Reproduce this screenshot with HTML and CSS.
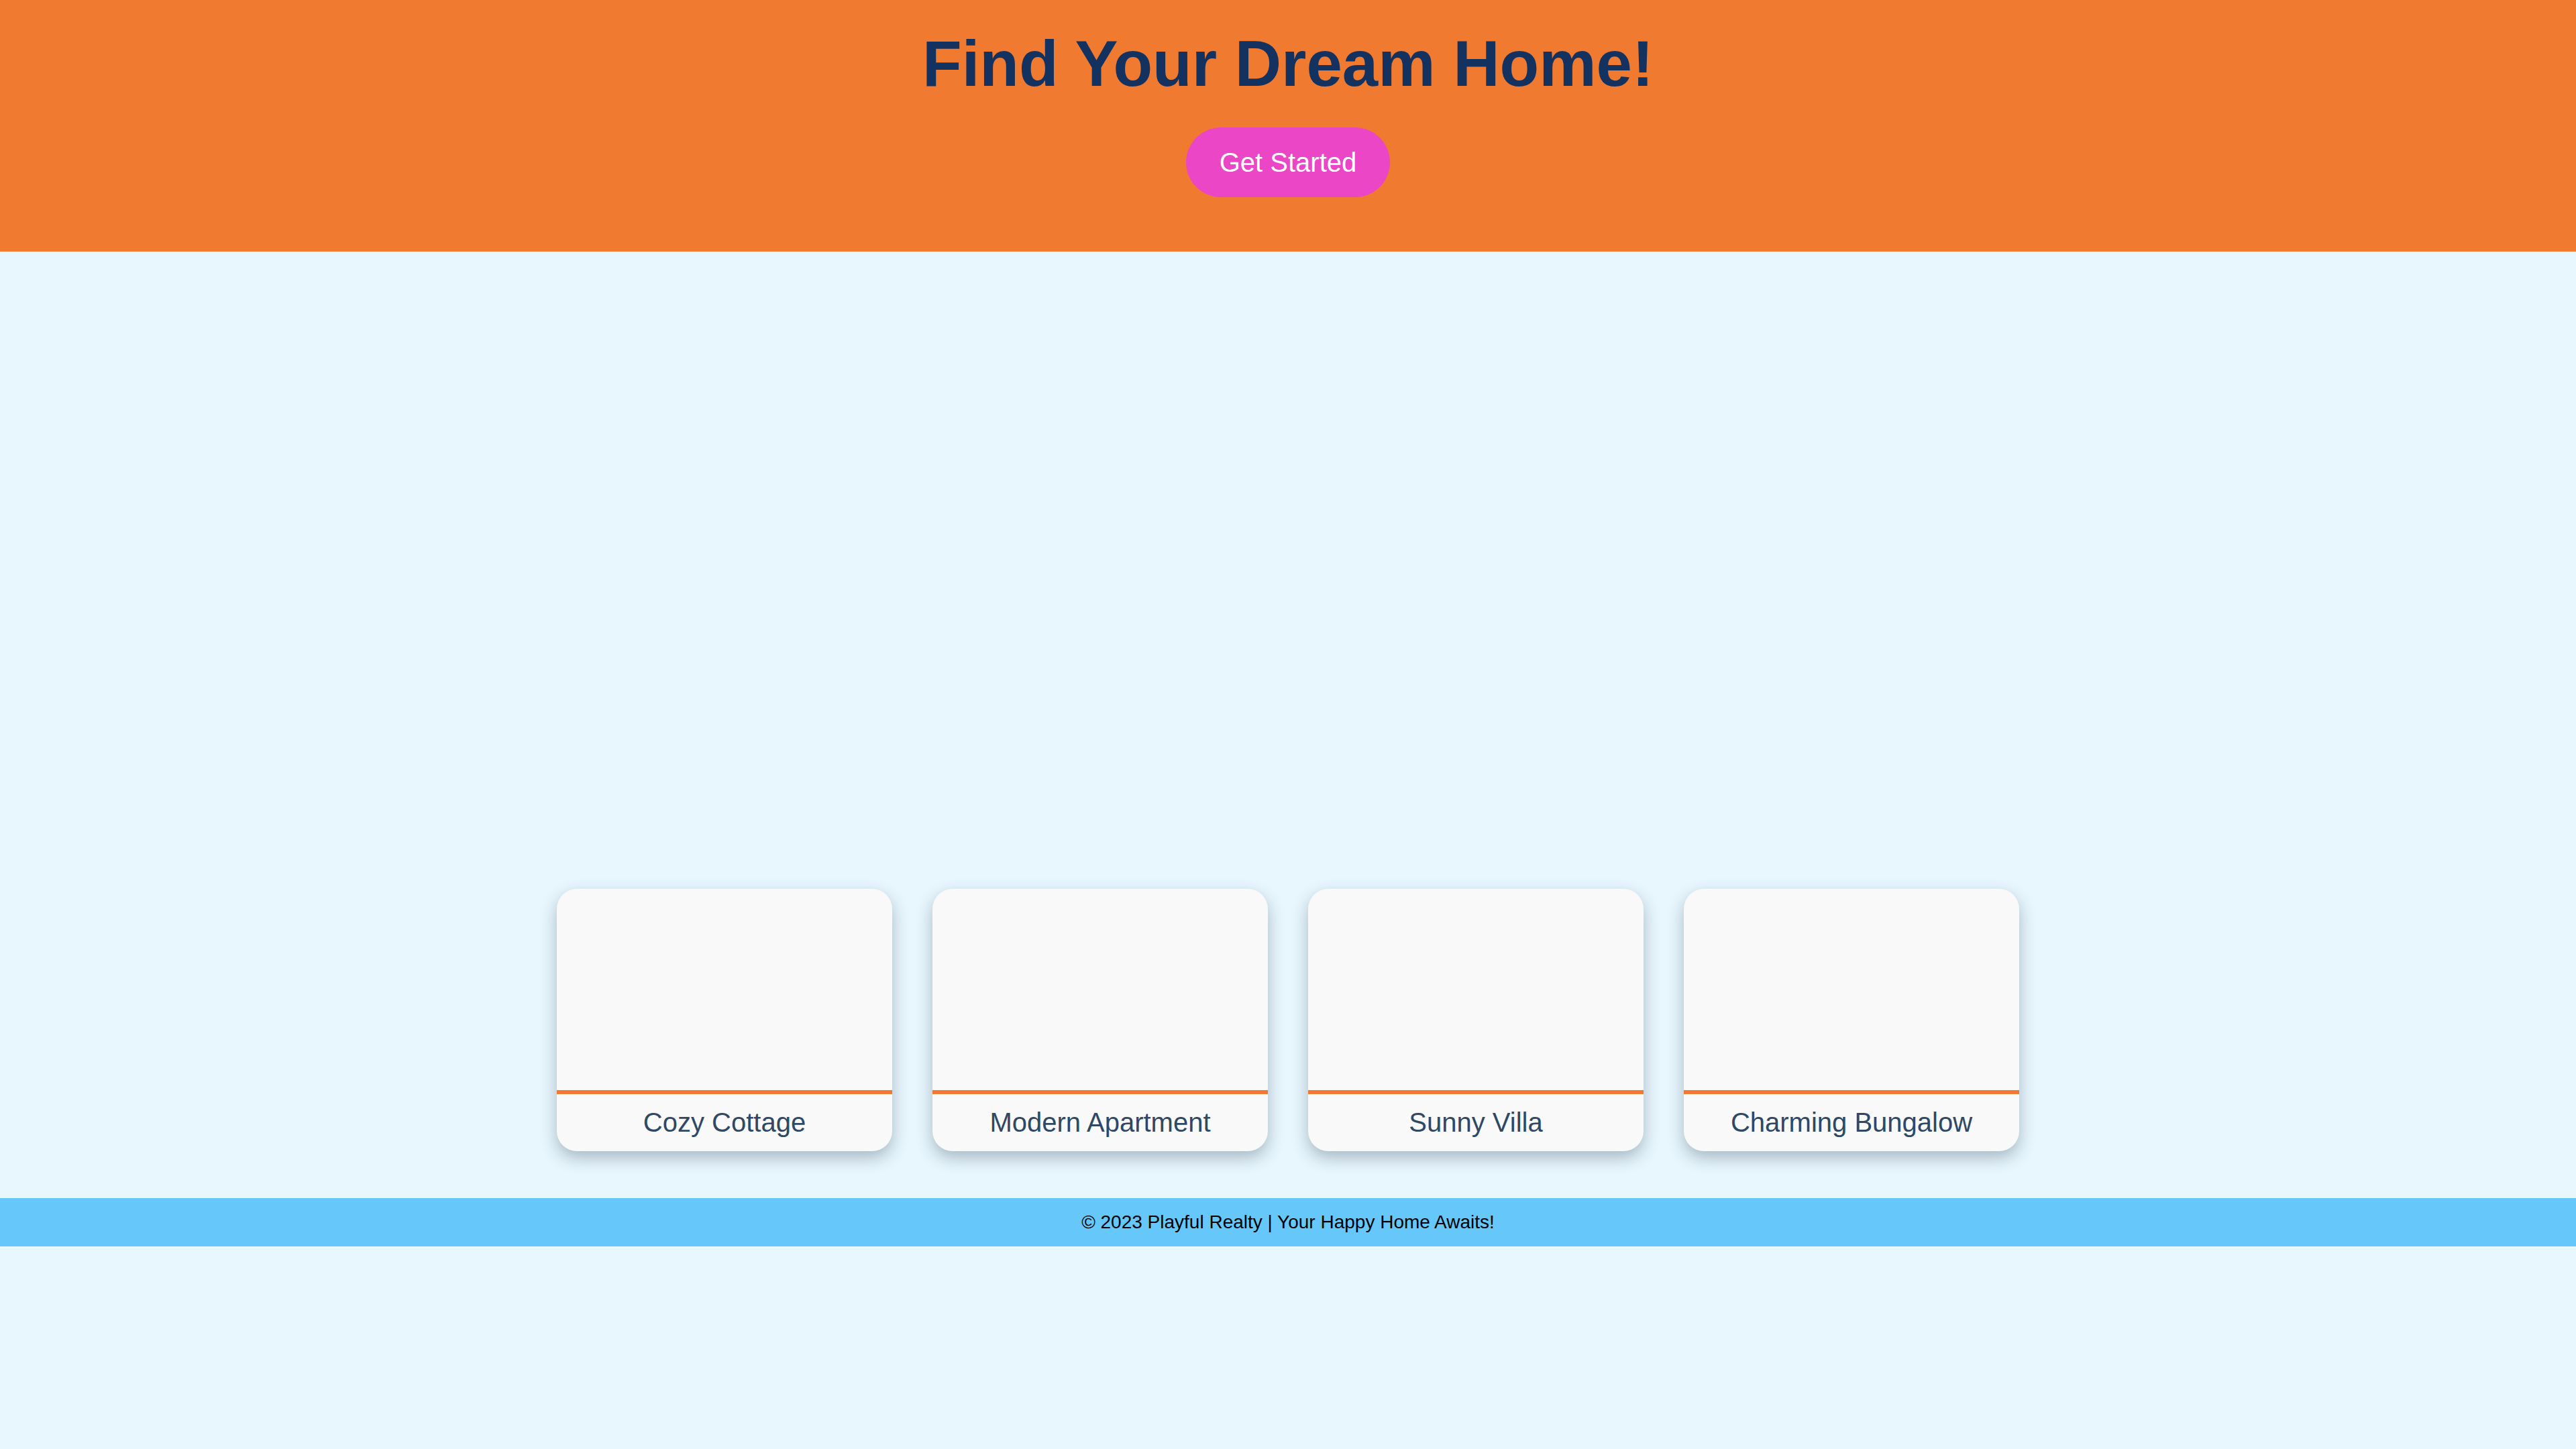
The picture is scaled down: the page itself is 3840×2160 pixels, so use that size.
FILE: index.html
```html
<!DOCTYPE html>
<html lang="en">
<head>
<meta charset="utf-8">
<title>Playful Realty</title>
<link rel="stylesheet" href="styles.css">
</head>
<body>
<header class="site-header">
  <h1 class="title">Find Your Dream Home!</h1>
  <a class="cta" href="#">Get Started</a>
</header>
<main class="main">
  <section class="hero-space"></section>
  <section class="listings">
    <div class="card">
      <div class="card-img"></div>
      <h3 class="card-title">Cozy Cottage</h3>
    </div>
    <div class="card">
      <div class="card-img"></div>
      <h3 class="card-title">Modern Apartment</h3>
    </div>
    <div class="card">
      <div class="card-img"></div>
      <h3 class="card-title">Sunny Villa</h3>
    </div>
    <div class="card">
      <div class="card-img"></div>
      <h3 class="card-title">Charming Bungalow</h3>
    </div>
  </section>
</main>
<footer class="site-footer">
  <p class="footer-text">© 2023 Playful Realty | Your Happy Home Awaits!</p>
</footer>
</body>
</html>
```
FILE: styles.css
```css
* { box-sizing: border-box; }
html, body { margin: 0; padding: 0; }
body {
  background: #e8f7fe;
  font-family: "Liberation Sans", Arial, sans-serif;
}
.site-header {
  background: #ef7a30;
  height: 375px;
  padding-top: 40px;
  display: flex;
  flex-direction: column;
  align-items: center;
}
.title {
  margin: 0;
  font-size: 96px;
  line-height: 110px;
  font-weight: bold;
  color: #14325f;
}
.cta {
  margin-top: 40px;
  display: inline-block;
  background: #ea46c6;
  color: #ffffff;
  text-decoration: none;
  font-size: 40px;
  line-height: 46px;
  padding: 29px 50px;
  border-radius: 60px;
}
.main {
  padding-bottom: 70px;
}
.hero-space {
  height: 890px;
}
.listings {
  padding-top: 60px;
  display: flex;
  justify-content: center;
  gap: 60px;
}
.card {
  width: 500px;
  background: #f9f9f9;
  border-radius: 30px;
  overflow: hidden;
  box-shadow: 0 10px 24px rgba(20, 40, 60, 0.3);
}
.card-img {
  height: 306px;
  border-bottom: 6px solid #ef7a30;
}
.card-title {
  margin: 0;
  padding: 19px 0 20px;
  text-align: center;
  font-size: 40px;
  line-height: 46px;
  font-weight: normal;
  color: #2e4865;
}
.site-footer {
  background: #66c8fa;
  padding: 20px 0;
  text-align: center;
}
.footer-text {
  margin: 0;
  font-size: 28px;
  line-height: 32px;
  color: #000000;
}
```
